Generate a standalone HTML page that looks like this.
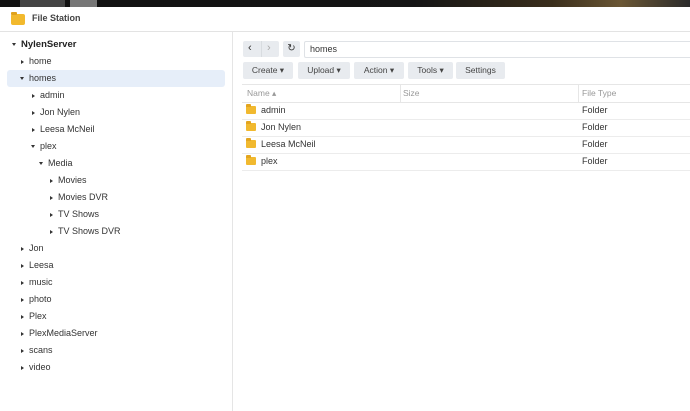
<!DOCTYPE html><html><head><style>
body{margin:0;width:690px;height:411px;overflow:hidden;background:#fff;font-family:"Liberation Sans",sans-serif;font-size:9px;color:#333;position:relative}
.a{position:absolute;white-space:nowrap}
.t{position:absolute;white-space:nowrap;line-height:17px;height:17px}
.tri{display:inline-block;width:0;height:0;vertical-align:middle;margin-right:5px}
.r{border-left:3px solid #333;border-top:2.5px solid transparent;border-bottom:2.5px solid transparent}
.d{border-top:3px solid #333;border-left:2.5px solid transparent;border-right:2.5px solid transparent}
.btn{position:absolute;top:62px;height:17px;background:#e8ebef;border-radius:2px;line-height:17px;text-align:center;font-size:8.5px;color:#444}
.row{position:absolute;left:242px;width:448px;height:17px;border-bottom:1px solid #ececec;line-height:17px}
.f{position:absolute;left:4px;top:4px;width:10px;height:8px;background:#f1b92f;border-radius:1px}
.f:before{content:"";position:absolute;left:0;top:-2px;width:5px;height:3px;background:#e3a51f;border-radius:1px 1px 0 0}
</style></head><body>
<div class="a" style="left:0;top:0;width:690px;height:7px;background:linear-gradient(90deg,#111 0,#151515 60%,#3a2e1c 80%,#6a5634 90%,#2a2a2a 100%)"></div>
<div class="a" style="left:20px;top:0;width:45px;height:7px;background:#444"></div>
<div class="a" style="left:70px;top:0;width:27px;height:7px;background:#777"></div>
<div class="a" style="left:0;top:7px;width:690px;height:24px;background:#fff;border-bottom:1px solid #e3e3e3"></div>
<div class="a" style="left:11px;top:14px;width:14px;height:11px;background:#f2b92d;border-radius:2px"></div>
<div class="a" style="left:11px;top:12px;width:6px;height:3px;background:#e0a21c;border-radius:1px"></div>
<div class="a" style="left:32px;top:13px;font-weight:bold;font-size:9px;color:#444">File Station</div>
<div class="a" style="left:232px;top:32px;width:1px;height:379px;background:#e5e5e5"></div>
<div class="a" style="left:7px;top:70px;width:218px;height:17px;background:#e6eef9;border-radius:3px"></div>
<div class="t" style="left:12px;top:36px;font-weight:bold;font-size:9.5px;color:#222"><span class="tri d"></span>NylenServer</div>
<div class="t" style="left:21px;top:53px"><span class="tri r"></span>home</div>
<div class="t" style="left:20px;top:70px"><span class="tri d"></span>homes</div>
<div class="t" style="left:32px;top:87px"><span class="tri r"></span>admin</div>
<div class="t" style="left:32px;top:104px"><span class="tri r"></span>Jon Nylen</div>
<div class="t" style="left:32px;top:121px"><span class="tri r"></span>Leesa McNeil</div>
<div class="t" style="left:31px;top:138px"><span class="tri d"></span>plex</div>
<div class="t" style="left:39px;top:155px"><span class="tri d"></span>Media</div>
<div class="t" style="left:50px;top:172px"><span class="tri r"></span>Movies</div>
<div class="t" style="left:50px;top:189px"><span class="tri r"></span>Movies DVR</div>
<div class="t" style="left:50px;top:206px"><span class="tri r"></span>TV Shows</div>
<div class="t" style="left:50px;top:223px"><span class="tri r"></span>TV Shows DVR</div>
<div class="t" style="left:21px;top:240px"><span class="tri r"></span>Jon</div>
<div class="t" style="left:21px;top:257px"><span class="tri r"></span>Leesa</div>
<div class="t" style="left:21px;top:274px"><span class="tri r"></span>music</div>
<div class="t" style="left:21px;top:291px"><span class="tri r"></span>photo</div>
<div class="t" style="left:21px;top:308px"><span class="tri r"></span>Plex</div>
<div class="t" style="left:21px;top:325px"><span class="tri r"></span>PlexMediaServer</div>
<div class="t" style="left:21px;top:342px"><span class="tri r"></span>scans</div>
<div class="t" style="left:21px;top:359px"><span class="tri r"></span>video</div>
<div class="a" style="left:243px;top:41px;width:36px;height:16px;background:#e8ebef;border-radius:2px"></div>
<div class="a" style="left:261px;top:41px;width:1px;height:16px;background:#d8dce0"></div>
<div class="a" style="left:248px;top:42px;font-size:11px;color:#333">&#8249;</div>
<div class="a" style="left:267px;top:42px;font-size:11px;color:#aaa">&#8250;</div>
<div class="a" style="left:283px;top:41px;width:17px;height:16px;background:#e8ebef;border-radius:2px;text-align:center;line-height:16px;font-size:10px">&#8635;</div>
<div class="a" style="left:304px;top:41px;width:386px;height:15px;border:1px solid #dfe2e6;border-right:none;border-radius:2px;line-height:15px;padding-left:5px">homes</div>
<div class="btn" style="left:243px;width:50px">Create ▾</div>
<div class="btn" style="left:298px;width:52px">Upload ▾</div>
<div class="btn" style="left:354px;width:50px">Action ▾</div>
<div class="btn" style="left:408px;width:45px">Tools ▾</div>
<div class="btn" style="left:456px;width:49px">Settings</div>
<div class="a" style="left:242px;top:84px;width:448px;height:17px;border-top:1px solid #e6e6e6;border-bottom:1px solid #e6e6e6;line-height:17px;color:#999;font-size:8.5px">
<span class="a" style="left:5px">Name ▴</span><span class="a" style="left:158px;top:0;width:1px;height:17px;background:#e6e6e6"></span><span class="a" style="left:161px">Size</span><span class="a" style="left:336px;top:0;width:1px;height:17px;background:#e6e6e6"></span><span class="a" style="left:340px">File Type</span></div>
<div class="row" style="top:102px"><span class="f"></span><span class="a" style="left:19px">admin</span><span class="a" style="left:340px">Folder</span></div>
<div class="row" style="top:119px"><span class="f"></span><span class="a" style="left:19px">Jon Nylen</span><span class="a" style="left:340px">Folder</span></div>
<div class="row" style="top:136px"><span class="f"></span><span class="a" style="left:19px">Leesa McNeil</span><span class="a" style="left:340px">Folder</span></div>
<div class="row" style="top:153px"><span class="f"></span><span class="a" style="left:19px">plex</span><span class="a" style="left:340px">Folder</span></div>
</body></html>
